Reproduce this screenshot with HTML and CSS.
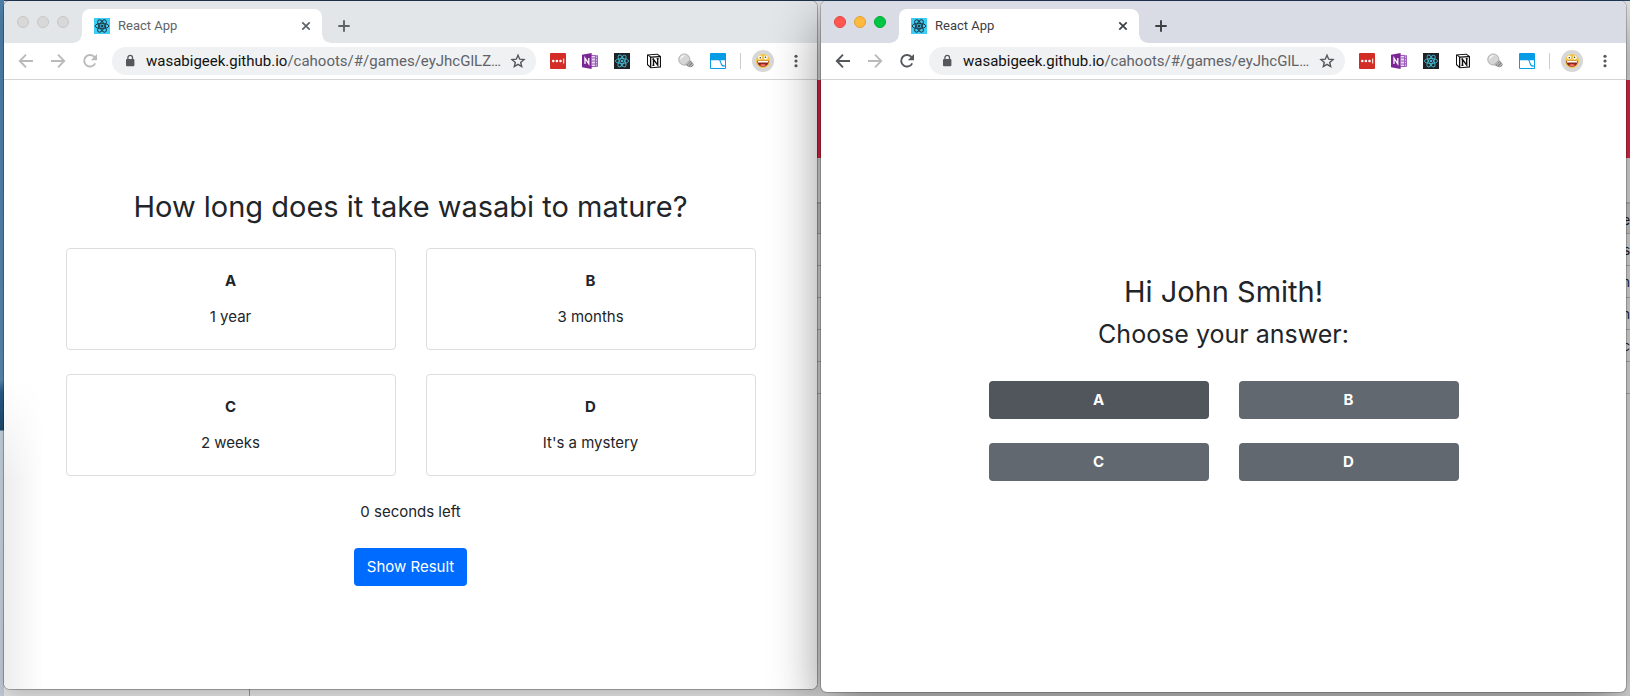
FILE: index.html
```html
<!DOCTYPE html>
<html lang="en">
<head>
<meta charset="utf-8">
<title>React App</title>
<link rel="stylesheet" href="styles.css">
</head>
<body>
<svg class="sprite" aria-hidden="true">
  <symbol id="atom" viewBox="0 0 16 16">
    <g fill="none" stroke="currentColor">
      <ellipse cx="8" cy="8" rx="6.8" ry="2.7"/>
      <ellipse cx="8" cy="8" rx="6.8" ry="2.7" transform="rotate(60 8 8)"/>
      <ellipse cx="8" cy="8" rx="6.8" ry="2.7" transform="rotate(120 8 8)"/>
    </g>
    <circle cx="8" cy="8" r="1.5" fill="currentColor"/>
  </symbol>
  <symbol id="close" viewBox="0 0 16 16"><path d="M4.3 4.3l7.4 7.4M11.7 4.3l-7.4 7.4" fill="none" stroke="currentColor" stroke-width="1.7"/></symbol>
  <symbol id="plus" viewBox="0 0 16 16"><path d="M8 1.500v13M1.500 8h13" fill="none" stroke="currentColor" stroke-width="2.200"/></symbol>
  <symbol id="back" viewBox="0 0 16 16"><path d="M15 8H2M8 1.7L1.8 8L8 14.3" fill="none" stroke="currentColor" stroke-width="1.9"/></symbol>
  <symbol id="forward" viewBox="0 0 16 16"><path d="M1 8h13M8 1.7L14.2 8L8 14.3" fill="none" stroke="currentColor" stroke-width="1.9"/></symbol>
  <symbol id="reload" viewBox="0 0 16 16"><path d="M13.2 10.3A5.8 5.8 0 1 1 12.6 4.2" fill="none" stroke="currentColor" stroke-width="1.9"/><path d="M15 1v6.2H8.8z" fill="currentColor"/></symbol>
  <symbol id="lock" viewBox="0 0 16 16"><rect x="4" y="6" width="8.4" height="7.2" rx="1" fill="currentColor"/><path d="M5.9 6.5V4.6a2.3 2.3 0 0 1 4.6 0v1.9" fill="none" stroke="currentColor" stroke-width="1.3"/></symbol>
  <symbol id="star" viewBox="0 0 16 16"><path d="M8 2.2l1.7 4 4.3.4-3.3 2.8 1 4.2L8 11.4l-3.7 2.2 1-4.2L2 6.6l4.3-.4z" fill="none" stroke="currentColor" stroke-width="1.4"/></symbol>
  <symbol id="lastpass" viewBox="0 0 16 16"><rect width="16" height="16" rx="1" fill="#d32d27"/><g fill="#fff"><circle cx="3.3" cy="8" r="1.3"/><circle cx="6.9" cy="8" r="1.3"/><circle cx="10.5" cy="8" r="1.3"/><path d="M13.2 5.6h1v4.8h-1z"/></g></symbol>
  <symbol id="onenote" viewBox="0 0 16 16"><path d="M9 2h6.5v12H9z" fill="#ead9f3"/><path d="M9 2.4h4.6v11.2H9M10 5h3.6M10 8h3.6M10 11h3.6M15.4 2.4v11.2M13.6 3h1.8M13.6 5.6h1.8M13.6 8.2h1.8M13.6 10.8h1.8M13.6 13.3h1.8" fill="none" stroke="#9656b6"/><path d="M0 1.7L9.6 0v16L0 14.3z" fill="#7a2695"/><path d="M3 11V5.2l3.8 5.6V5" fill="none" stroke="#fff" stroke-width="1.3"/></symbol>
  <symbol id="devtools" viewBox="0 0 16 16"><rect width="16" height="16" fill="#202124"/><g fill="none" stroke="#45b6cf" stroke-width=".9"><ellipse cx="8" cy="8" rx="6.6" ry="2.5"/><ellipse cx="8" cy="8" rx="6.6" ry="2.5" transform="rotate(60 8 8)"/><ellipse cx="8" cy="8" rx="6.6" ry="2.5" transform="rotate(120 8 8)"/></g><circle cx="8" cy="8" r="1.3" fill="#45b6cf"/></symbol>
  <symbol id="notion" viewBox="0 0 16 16"><path d="M1 1.500L11.500.8 15 3.200V14.600L4.600 15.300 1 12z" fill="#111"/><path d="M2 2.600l2 1.700v9L2 11.300zM3 2.200l8.200-.5 1.700 1.200-8 .5z" fill="#fff"/><path d="M5.300 4.700l8.600-.5v9.400l-8.600.6z" fill="#fff"/><path d="M7.500 12.300V6.300l4.200 5.800V5.500M6.400 6.200h1.700M10.700 5.600h2M6.400 12.400h2" fill="none" stroke="#111" stroke-width="1.400"/></symbol>
  <symbol id="bulb" viewBox="0 0 16 16"><path d="M7.500 12L12.800 7.400l2.900 3.800c.3 1.600-2.400 3.500-4 3z" fill="#858585"/><path d="M9.800 12.600l3.800-3.700M11.600 13.900l3.600-3.300" stroke="#e4e4e4" stroke-width=".8"/><circle cx="6.300" cy="6.500" r="5.600" fill="#d6d6d6" stroke="#9b9b9b" stroke-width=".7"/><path d="M2.300 7A4.300 4.300 0 0 1 7.500 2.300C5.500 3.200 4 4.500 2.300 7z" fill="#fff"/><path d="M6.500 12l5.600-4.800" stroke="#b0b0b0" stroke-width="1"/></symbol>
  <symbol id="clip" viewBox="0 0 16 16"><rect width="16" height="16" rx="1" fill="#069de6"/><path d="M1 10.500h6.500c2.200 0 1.800 4.500 5 4.500H1z" fill="#fff"/><path d="M1 7.200h7.800c1.600 0 1.500 5.600 4 6.300.8.200 1.500.1 2.200.1V15H1z" fill="#fff"/><path d="M10.400 7.200H15v5.200c-3.300.3-3.300-2.700-4.600-5.200z" fill="#fff"/></symbol>
  <symbol id="avatar" viewBox="0 0 22 22"><circle cx="11" cy="11" r="11" fill="#d7d7d7"/><circle cx="11" cy="11" r="7" fill="#f5c542"/><path d="M5.300 10.800h11.400c0 8-11.400 8-11.400 0z" fill="#8b2520"/><path d="M6 11h10v1.500H6z" fill="#fff"/><path d="M8 15c2-1.500 4-1.500 6 0-1.500 2-4.500 2-6 0z" fill="#f36b62"/><circle cx="8" cy="7.500" r="1.900" fill="#fff"/><circle cx="13.800" cy="7.500" r="1.900" fill="#fff"/><circle cx="8.300" cy="7.700" r=".8" fill="#333"/><circle cx="13.500" cy="7.300" r=".8" fill="#333"/></symbol>
  <symbol id="dots" viewBox="0 0 16 16"><g fill="currentColor"><circle cx="8" cy="2.600" r="1.800"/><circle cx="8" cy="8" r="1.800"/><circle cx="8" cy="13.400" r="1.800"/></g></symbol>
</svg>

<main class="desktop">
  <div class="behind" aria-hidden="true">
    <div class="behind-bar"></div>
    <div class="behind-banner"></div>
    <div class="behind-space"></div>
    <div class="behind-row behind-head">e</div>
    <div class="behind-row">s</div>
    <div class="behind-row">m</div>
    <div class="behind-row">In</div>
    <div class="behind-row">c</div>
    <div class="behind-row"></div>
    <div class="behind-rest"></div>
  </div>

  <section class="window host">
    <header class="tabstrip">
      <div class="lights"><button class="light" aria-label="Close window"></button><button class="light" aria-label="Minimise window"></button><button class="light" aria-label="Zoom window"></button></div>
      <div class="tab">
        <svg class="icon favicon"><use href="#atom"/></svg>
        <span class="tab-title">React App</span>
        <button class="tool" aria-label="Close tab"><svg class="icon"><use href="#close"/></svg></button>
      </div>
      <button class="tool new-tab" aria-label="New tab"><svg class="icon icon-small"><use href="#plus"/></svg></button>
    </header>
    <nav class="toolbar">
      <div class="nav-tools">
        <button class="tool faded" aria-label="Back"><svg class="icon"><use href="#back"/></svg></button>
        <button class="tool faded" aria-label="Forward"><svg class="icon"><use href="#forward"/></svg></button>
        <button class="tool faded" aria-label="Reload"><svg class="icon"><use href="#reload"/></svg></button>
      </div>
      <div class="omnibox">
        <svg class="icon"><use href="#lock"/></svg>
        <div class="url" role="textbox" aria-label="Address" tabindex="0"><span class="domain">wasabigeek.github.io</span>/cahoots/#/games/eyJhcGlLZ…</div>
        <button class="tool" aria-label="Bookmark"><svg class="icon"><use href="#star"/></svg></button>
      </div>
      <div class="extensions">
        <button class="tool" aria-label="Passwords"><svg class="icon"><use href="#lastpass"/></svg></button>
        <button class="tool" aria-label="Notes"><svg class="icon"><use href="#onenote"/></svg></button>
        <button class="tool" aria-label="Developer tools"><svg class="icon"><use href="#devtools"/></svg></button>
        <button class="tool" aria-label="Notion"><svg class="icon"><use href="#notion"/></svg></button>
        <button class="tool" aria-label="Lights"><svg class="icon"><use href="#bulb"/></svg></button>
        <button class="tool" aria-label="Clipper"><svg class="icon"><use href="#clip"/></svg></button>
      </div>
      <div class="profile">
        <button class="tool" aria-label="Profile"><svg class="avatar"><use href="#avatar"/></svg></button>
        <button class="tool" aria-label="Menu"><svg class="icon icon-menu"><use href="#dots"/></svg></button>
      </div>
    </nav>
    <article class="page">
      <h1 class="title question">How long does it take wasabi to mature?</h1>
      <div class="cards">
        <div class="card"><strong>A</strong><span>1 year</span></div>
        <div class="card"><strong>B</strong><span>3 months</span></div>
        <div class="card"><strong>C</strong><span>2 weeks</span></div>
        <div class="card"><strong>D</strong><span>It's a mystery</span></div>
      </div>
      <p class="timer">0 seconds left</p>
      <button class="btn btn-primary">Show Result</button>
    </article>
  </section>

  <section class="window player">
    <header class="tabstrip">
      <div class="lights"><button class="light red" aria-label="Close window"></button><button class="light amber" aria-label="Minimise window"></button><button class="light green" aria-label="Zoom window"></button></div>
      <div class="tab">
        <svg class="icon favicon"><use href="#atom"/></svg>
        <span class="tab-title">React App</span>
        <button class="tool" aria-label="Close tab"><svg class="icon"><use href="#close"/></svg></button>
      </div>
      <button class="tool new-tab" aria-label="New tab"><svg class="icon icon-small"><use href="#plus"/></svg></button>
    </header>
    <nav class="toolbar">
      <div class="nav-tools">
        <button class="tool" aria-label="Back"><svg class="icon"><use href="#back"/></svg></button>
        <button class="tool faded" aria-label="Forward"><svg class="icon"><use href="#forward"/></svg></button>
        <button class="tool" aria-label="Reload"><svg class="icon"><use href="#reload"/></svg></button>
      </div>
      <div class="omnibox">
        <svg class="icon"><use href="#lock"/></svg>
        <div class="url" role="textbox" aria-label="Address" tabindex="0"><span class="domain">wasabigeek.github.io</span>/cahoots/#/games/eyJhcGlL…</div>
        <button class="tool" aria-label="Bookmark"><svg class="icon"><use href="#star"/></svg></button>
      </div>
      <div class="extensions">
        <button class="tool" aria-label="Passwords"><svg class="icon"><use href="#lastpass"/></svg></button>
        <button class="tool" aria-label="Notes"><svg class="icon"><use href="#onenote"/></svg></button>
        <button class="tool" aria-label="Developer tools"><svg class="icon"><use href="#devtools"/></svg></button>
        <button class="tool" aria-label="Notion"><svg class="icon"><use href="#notion"/></svg></button>
        <button class="tool" aria-label="Lights"><svg class="icon"><use href="#bulb"/></svg></button>
        <button class="tool" aria-label="Clipper"><svg class="icon"><use href="#clip"/></svg></button>
      </div>
      <div class="profile">
        <button class="tool" aria-label="Profile"><svg class="avatar"><use href="#avatar"/></svg></button>
        <button class="tool" aria-label="Menu"><svg class="icon icon-menu"><use href="#dots"/></svg></button>
      </div>
    </nav>
    <article class="page">
      <h1 class="title">Hi John Smith!</h1>
      <h2 class="subtitle">Choose your answer:</h2>
      <div class="answers">
        <button class="btn btn-answer active">A</button>
        <button class="btn btn-answer">B</button>
        <button class="btn btn-answer">C</button>
        <button class="btn btn-answer">D</button>
      </div>
    </article>
  </section>
</main>
</body>
</html>
```

FILE: styles.css
```css
* { box-sizing: border-box; }

body {
  margin: 0;
  color: #212529;
  font: 15px/24px Inter, "Liberation Sans", sans-serif;
}

.sprite { position: absolute; width: 0; height: 0; }

button {
  margin: 0;
  padding: 0;
  border: 0;
  background: none;
  color: inherit;
  font: inherit;
  cursor: pointer;
}

/* Desktop and what lies behind the windows */
.desktop {
  position: relative;
  display: grid;
  grid-template-columns: 813fr 805fr;
  gap: 4px;
  min-height: 100vh;
  padding: 1px 4px 4px;
  overflow: hidden;
  background: linear-gradient(#4b80ab 0, #5889b1 380px, #285e8b 392px, #1d4a70 430px, #c3d3de 431px, #c3cbd9 100%);
}

.behind {
  position: absolute;
  inset: 0 0 0 4px;
  display: flex;
  flex-direction: column;
  border-top: 1px solid #284566;
  background: linear-gradient(90deg, transparent 245px, #999 245px, #999 246px, transparent 246px) #e6e6e6;
  color: #222;
  font-size: 13px;
}

.behind-bar { height: 79px; }
.behind-banner { height: 78px; background: #e8284a; }
.behind-space { height: 44px; }
.behind-row {
  height: 32px;
  padding-top: 4px;
  border-bottom: 1px solid #b5b5b5;
  text-align: right;
}
.behind-head { border-top: 2px solid #bbb; background: #d4d4d4; }
.behind-rest { flex: 1; }

/* Browser window */
.window {
  position: relative;
  display: flex;
  flex-direction: column;
  min-width: 0;
  border-radius: 6px;
  overflow: hidden;
  background: #fff;
}
.host {
  margin-bottom: 3px;
  box-shadow: 0 0 0 1px rgba(0, 0, 0, .25), 0 8px 20px rgba(0, 0, 0, .2);
}
.player { box-shadow: 0 0 0 1px rgba(0, 0, 0, .2), 0 20px 50px rgba(0, 0, 0, .45); }

.tabstrip {
  display: flex;
  align-items: flex-end;
  height: 42px;
  padding-left: 13px;
  background: #e2e6e9;
  color: #5f6368;
}
.player .tabstrip { background: #d9dce5; color: #3c4043; }

.lights { display: flex; gap: 8px; width: 65px; padding-bottom: 15px; }
.light {
  width: 12px;
  height: 12px;
  border: 1px solid #c7c7c7;
  border-radius: 50%;
  background: #d8d8d8;
}
.red { border-color: #e2443f; background: #ff5650; }
.amber { border-color: #e0a033; background: #ffb93d; }
.green { border-color: #03a735; background: #02c744; }

.tab {
  position: relative;
  display: flex;
  align-items: center;
  gap: 8px;
  width: 240px;
  height: 34px;
  padding: 0 8px 0 12px;
  border-radius: 8px 8px 0 0;
  background: #fff;
}
.tab::before,
.tab::after {
  content: "";
  position: absolute;
  bottom: 0;
  width: 8px;
  height: 8px;
}
.tab::before { right: 100%; background: radial-gradient(circle at 0 0, transparent 7px, #fff 8px); }
.tab::after { left: 100%; background: radial-gradient(circle at 100% 0, transparent 7px, #fff 8px); }
.tab-title { flex: 1; font: 13px/16px Roboto, sans-serif; }
.favicon { background: #3dcdf4; color: #1c3c48; }
.new-tab { width: 16px; height: 34px; margin-left: 14px; }

.icon { display: block; width: 16px; height: 16px; flex: none; }
.icon-small { width: 14px; height: 14px; }
.icon-menu { width: 14px; height: 14px; }
.avatar { display: block; width: 22px; height: 22px; }
.tool { display: flex; align-items: center; justify-content: center; }
.faded { color: #b8babc; }

.toolbar {
  display: flex;
  align-items: center;
  height: 37px;
  padding: 0 14px;
  border-bottom: 1px solid #d5d5d5;
  color: #54575b;
}
.nav-tools { display: flex; gap: 16px; }

.omnibox {
  display: flex;
  flex: 1;
  align-items: center;
  gap: 8px;
  min-width: 0;
  height: 28px;
  margin: 0 14px;
  padding: 0 10px;
  border-radius: 14px;
  background: #eff1f3;
}
.url {
  flex: 1;
  min-width: 0;
  overflow: hidden;
  white-space: nowrap;
  color: #5f6368;
  font: 15px/20px Roboto, sans-serif;
}
.domain { color: #111; }

.extensions { display: flex; gap: 16px; padding-right: 14px; border-right: 1px solid #ccc; height: 16px; }
.profile { display: flex; gap: 15px; padding-left: 11px; }
.profile .tool:last-child { width: 14px; }

/* Page content */
.page {
  display: flex;
  flex: 1;
  flex-direction: column;
  align-items: center;
  justify-content: center;
  padding: 18px 16px 16px;
  text-align: center;
}
.host .page {
  background:
    linear-gradient(#fff 300px, transparent 400px),
    linear-gradient(90deg, #ededed, #fff 40px);
}

.title { margin: 0 0 6px; padding-top: 2px; font-size: 29px; font-weight: 400; line-height: 38px; }
.question { margin-bottom: 22px; }
.subtitle { margin: 0 0 30px; font-size: 25px; font-weight: 400; line-height: 34px; }

.cards {
  display: grid;
  grid-template-columns: 1fr 1fr;
  gap: 24px 30px;
  width: 100%;
  max-width: 690px;
}
.card {
  display: flex;
  flex-direction: column;
  gap: 12px;
  padding: 20px;
  border: 1px solid #dcdddf;
  border-radius: 4px;
  background: #fff;
}
.timer { margin: 24px 0; }

.btn { height: 38px; padding: 0 13px; border-radius: 4px; color: #fff; }
.btn-primary { background: #006cff; }

.answers {
  display: grid;
  grid-template-columns: 1fr 1fr;
  gap: 24px 30px;
  width: 100%;
  max-width: 470px;
  margin-bottom: 22px;
}
.btn-answer { background: #616870; font-weight: 700; }
.btn-answer.active { background: #50565b; }
```
